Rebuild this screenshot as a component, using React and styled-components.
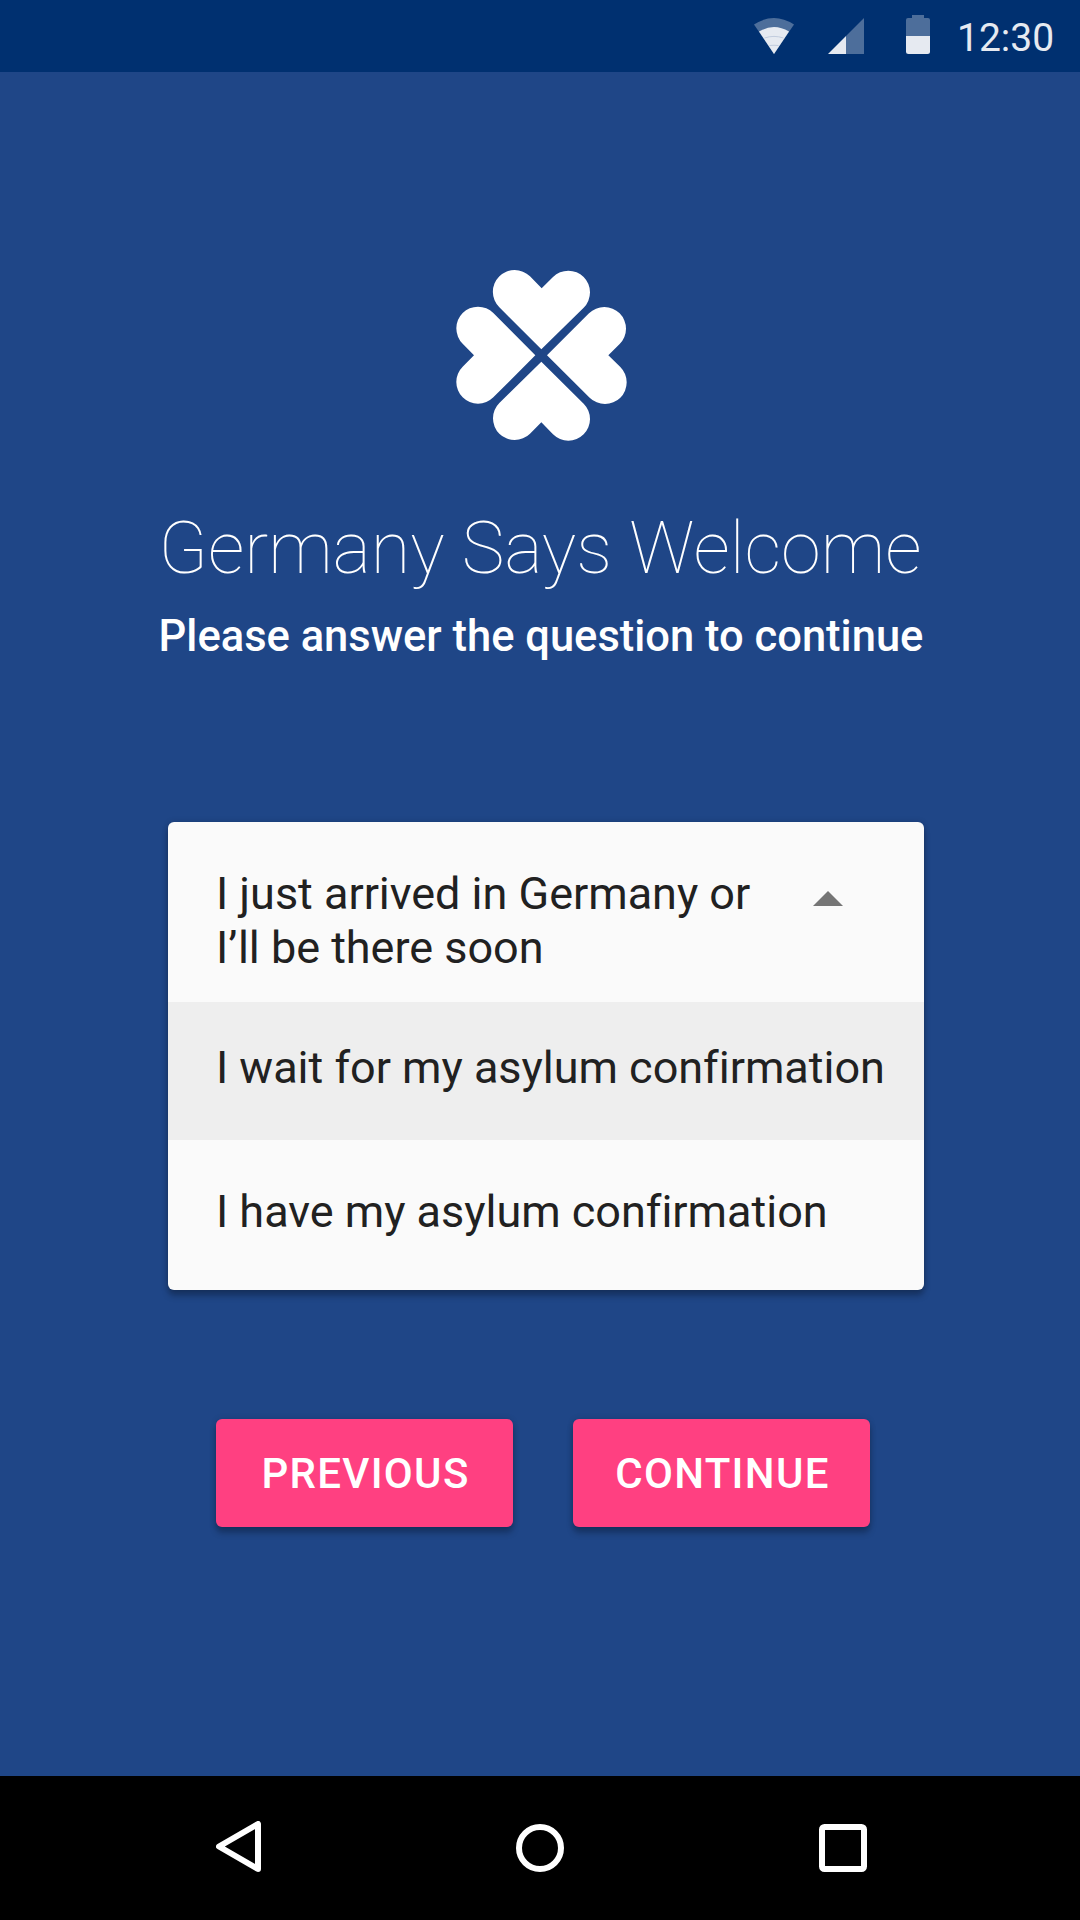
import React from "react";
import styled, { createGlobalStyle } from "styled-components";

const GlobalStyle = createGlobalStyle`
  *, *::before, *::after { box-sizing: border-box; }
  body { margin: 0; background: #1f4687; }
`;

const Screen = styled.div`
  display: flex;
  flex-direction: column;
  width: 1080px;
  height: 1920px;
  overflow: hidden;
  background: #1f4687;
  color: #fff;
  font-family: Roboto, "Noto Sans", sans-serif;
`;

const StatusBar = styled.header`
  flex: none;
  display: flex;
  align-items: flex-start;
  justify-content: flex-end;
  height: 72px;
  padding-right: 25px;
  background: #003070;
`;

const StatusIcon = styled.svg`
  flex: none;
  display: block;
  width: ${(p) => p.$width}px;
  height: 72px;
  margin-right: ${(p) => p.$gap}px;
`;

const Clock = styled.time`
  font-size: 39px;
  line-height: 48px;
  padding-top: 14px;
  width: 98px;
  color: #e6eaf1;
  white-space: nowrap;
`;

const Main = styled.main`
  flex: 1;
  display: flex;
  flex-direction: column;
  align-items: center;
  padding-top: 198px;
`;

const Clover = styled.svg`
  display: block;
  width: 171px;
  height: 171px;
  margin-left: 3px;
`;

const Title = styled.h1`
  margin: 66px 0 0;
  font-size: 72px;
  line-height: 84px;
  font-weight: 100;
  white-space: nowrap;
`;

const Subtitle = styled.p`
  margin: 19px 0 0 2px;
  font-size: 43.5px;
  line-height: 54px;
  font-weight: 500;
  white-space: nowrap;
`;

const Select = styled.ul`
  list-style: none;
  width: 756px;
  margin: 158px 0 0 12px;
  padding: 0;
  border-radius: 6px;
  overflow: hidden;
  background: #fafafa;
  color: #212121;
  box-shadow: 0 0 6px rgba(0, 0, 0, 0.16), 0 6px 6px rgba(0, 0, 0, 0.26);
`;

const Option = styled.li`
  display: flex;
  align-items: flex-start;
  justify-content: space-between;
  height: ${(p) => p.$height}px;
  padding: ${(p) => p.$top}px 0 0 48px;
  background: ${(p) => (p.$active ? "#eeeeee" : "transparent")};
  font-size: 45px;
  line-height: 54px;
  letter-spacing: -0.02px;
  font-variant-ligatures: none;
  white-space: nowrap;
`;

const Caret = styled.svg`
  display: block;
  width: 30px;
  height: 15px;
  margin: 24px 81px 0 0;
`;

const Actions = styled.div`
  display: flex;
  gap: 60px;
  margin: 129px 0 0 6px;
`;

const Button = styled.button`
  width: 297px;
  height: 108px;
  padding: 2px 0 0 2px;
  border: 0;
  border-radius: 6px;
  background: #ff4081;
  color: #fff;
  font-family: inherit;
  font-size: 42px;
  line-height: 54px;
  font-weight: 500;
  letter-spacing: 1.3px;
  box-shadow: 0 0 6px rgba(0, 0, 0, 0.14), 0 6px 6px rgba(0, 0, 0, 0.26);
`;

const NavBar = styled.nav`
  flex: none;
  display: flex;
  justify-content: space-between;
  height: 144px;
  padding: 45px 213px 0 216px;
  background: #000;
`;

const NavIcon = styled.svg`
  display: block;
  width: ${(p) => p.$width}px;
  height: 51px;
  fill: none;
  stroke: #fff;
  stroke-width: 6;
  stroke-linejoin: round;
`;

const options = [
  { lines: ["I just arrived in Germany or", "I’ll be there soon"], height: 180, top: 45, open: true },
  { lines: ["I wait for my asylum confirmation"], height: 138, top: 39, active: true },
  { lines: ["I have my asylum confirmation"], height: 150, top: 45 },
];

export default function App() {
  return (
    <Screen>
      <GlobalStyle />
      <StatusBar>
        <StatusIcon $width={40} $gap={34} viewBox="0 0 40 72">
          <path d="M20 54 L0 24.5 Q20 11.5 40 24.5 Z" fill="#fff" fillOpacity="0.3" />
          <path d="M20 54 L5 31.5 Q20 22.500 35 31.500 Z" fill="#e6eaf1" />
          <path d="M10.500 38 Q20 34.800 29.500 38 M15.500 45.500 Q20 45 24.500 45.500" fill="none" stroke="#b8c4d8" strokeWidth="0.800" />
        </StatusIcon>
        <StatusIcon $width={36} $gap={42} viewBox="0 0 36 72">
          <path d="M18 36 L36 18 V54 H18 Z" fill="#fff" fillOpacity="0.3" />
          <path d="M0 54 L18 36 V54 Z" fill="#e6eaf1" />
        </StatusIcon>
        <StatusIcon $width={24} $gap={27} viewBox="0 0 24 72">
          <path d="M0 36 V20 Q0 18 2 18 H6 V15 H18 V18 H22 Q24 18 24 20 V36 Z" fill="#fff" fillOpacity="0.3" />
          <path d="M0 36 H24 V51.500 Q24 54 21.500 54 H2.500 Q0 54 0 51.500 Z" fill="#e6eaf1" />
        </StatusIcon>
        <Clock>12:30</Clock>
      </StatusBar>
      <Main>
        <Clover viewBox="48 45 513 513" fill="#fff">
          <path d="M304 283 L178 157 A65 65 0 0 1 270 64 L305 100 L339 66 A65 65 0 0 1 431 158 Z" />
          <path d="M286 301 L160 427 A65 65 0 0 1 68 335 L102 301 L68 266 A65 65 0 0 1 160 174 Z" />
          <path d="M321 301 L447 175 A65 65 0 0 1 539 267 L505 301 L541 336 A65 65 0 0 1 449 428 Z" />
          <path d="M304 320 L431 446 A65 65 0 0 1 339 538 L304 502 L270 536 A65 65 0 0 1 178 444 Z" />
        </Clover>
        <Title>Germany Says Welcome</Title>
        <Subtitle>Please answer the question to continue</Subtitle>
        <Select>
          {options.map((o) => (
            <Option key={o.lines[0]} $height={o.height} $top={o.top} $active={o.active}>
              <span>
                {o.lines.map((line, i) => (
                  <React.Fragment key={line}>
                    {i > 0 && <br />}
                    {line}
                  </React.Fragment>
                ))}
              </span>
              {o.open && (
                <Caret viewBox="0 0 30 15">
                  <path d="M0 15 L15 0 L30 15 Z" fill="#757575" />
                </Caret>
              )}
            </Option>
          ))}
        </Select>
        <Actions>
          <Button>PREVIOUS</Button>
          <Button>CONTINUE</Button>
        </Actions>
      </Main>
      <NavBar>
        <NavIcon $width={45} viewBox="0 0 45 51">
          <path d="M3 25.500 L42 3 V48 Z" />
        </NavIcon>
        <NavIcon $width={48} viewBox="0 0 48 51">
          <circle cx="24" cy="27" r="21" />
        </NavIcon>
        <NavIcon $width={48} viewBox="0 0 48 51">
          <rect x="3" y="6" width="42" height="42" rx="2.500" />
        </NavIcon>
      </NavBar>
    </Screen>
  );
}
